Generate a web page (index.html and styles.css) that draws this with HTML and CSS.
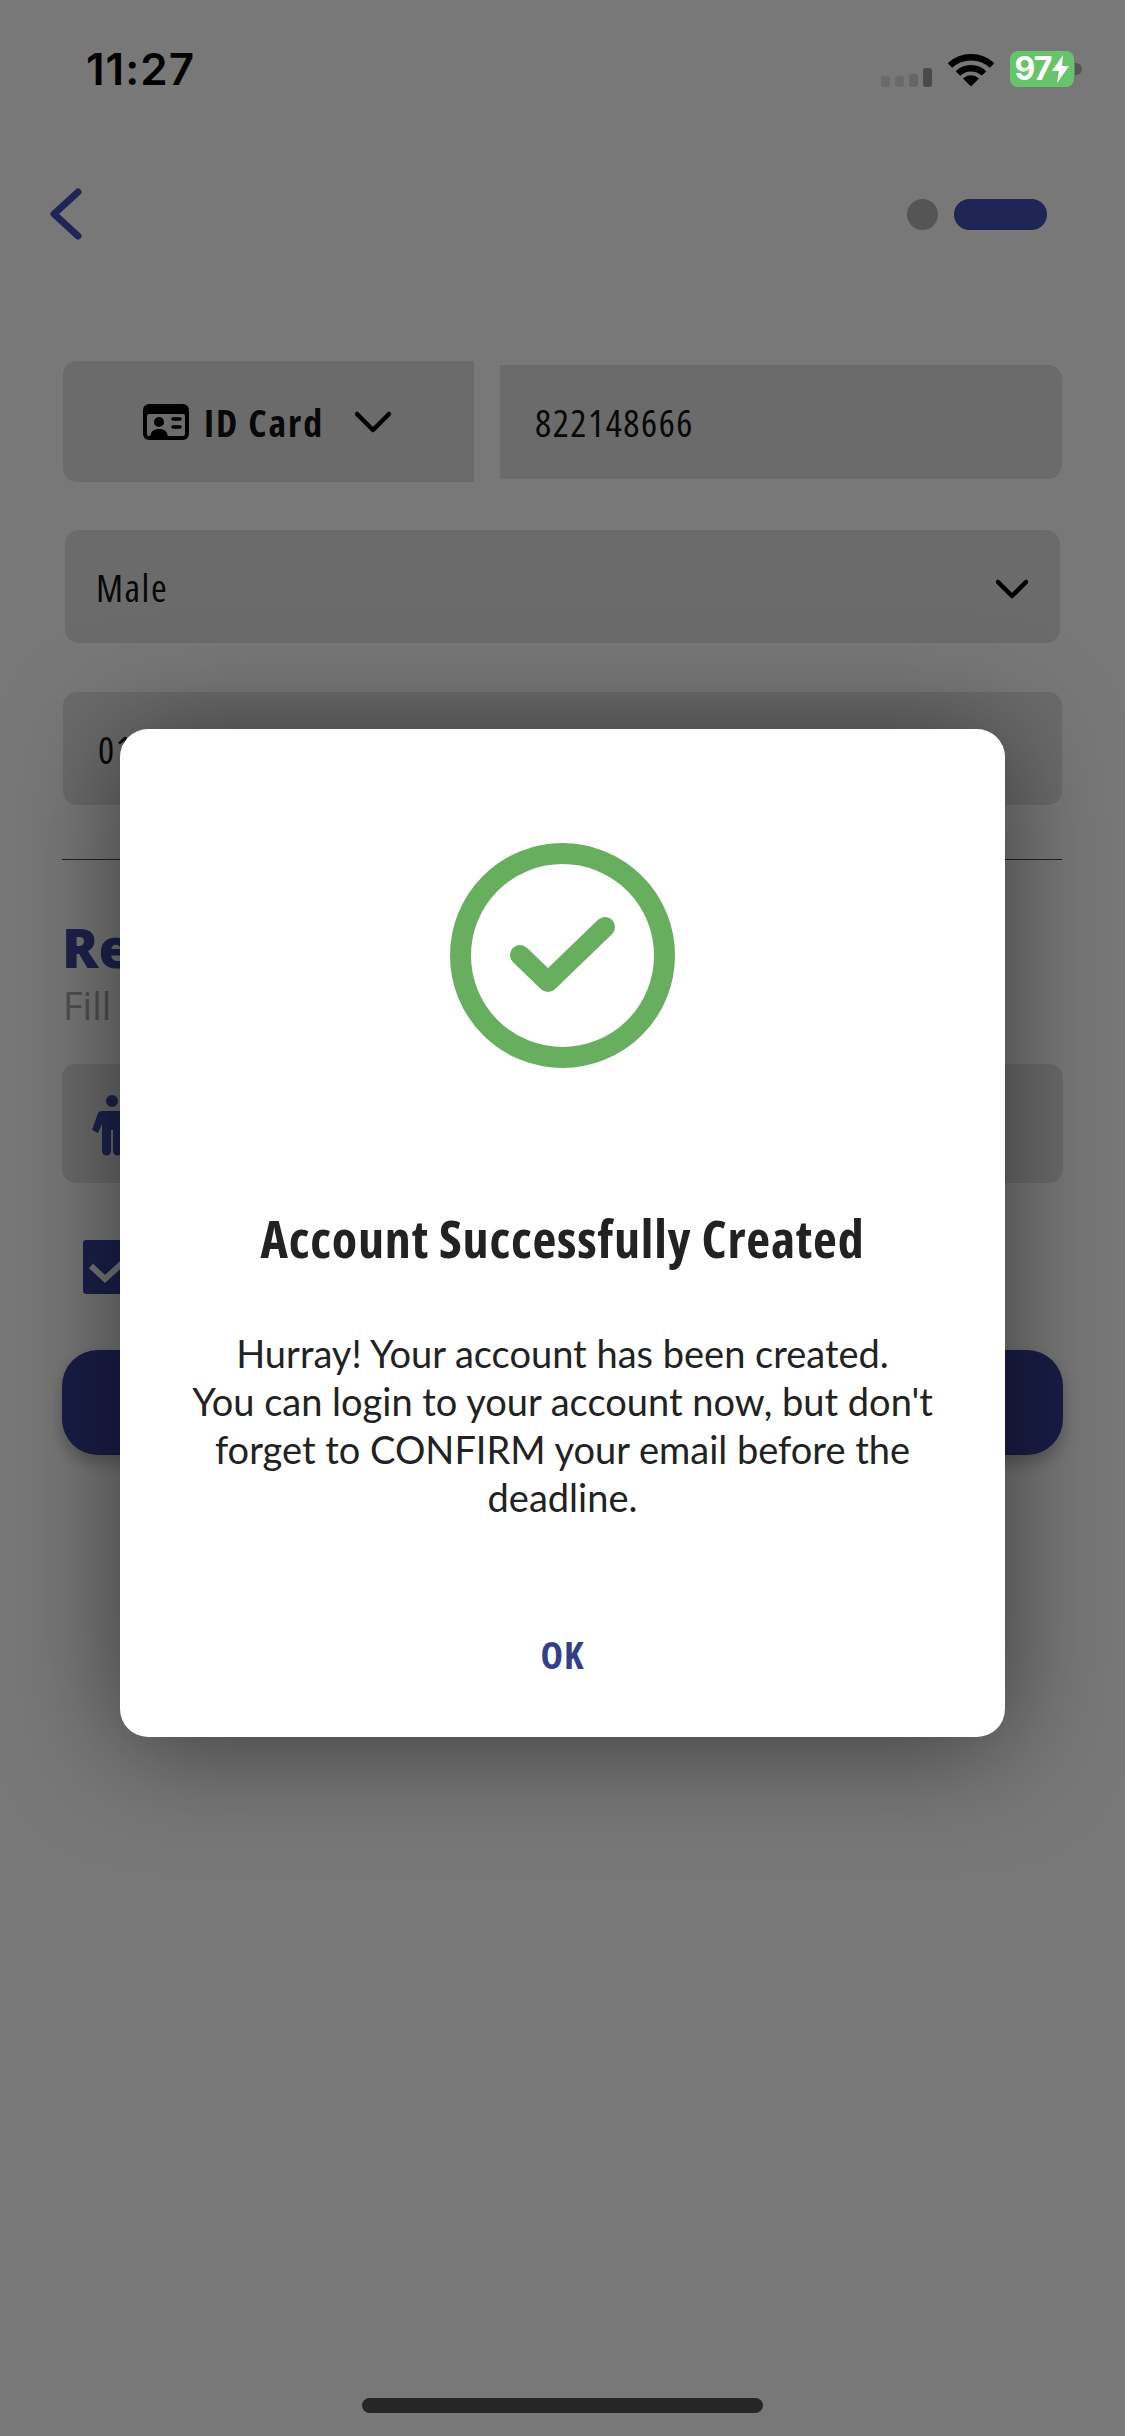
FILE: index.html
```html
<!DOCTYPE html>
<html lang="en">
<head>
<meta charset="utf-8">
<title>Account Successfully Created</title>
<link rel="stylesheet" href="styles.css">
</head>
<body>
<main class="page">
  <div class="statusbar">
    <span class="time">11:27</span>
    <div class="status-icons">
      <svg class="signal" width="52" height="20" viewBox="0 0 52 20"><rect x="0" y="8" width="9" height="11" rx="3" fill="#6a6a6a"/><rect x="14" y="8" width="9" height="11" rx="3" fill="#6a6a6a"/><rect x="28" y="6" width="9" height="13" rx="3" fill="#666"/><rect x="42" y="0" width="9" height="19" rx="3" fill="#4a4a4a"/></svg>
      <svg class="wifi" width="46" height="34" viewBox="0 0 46 34"><path d="M2 12.500C13.500 1.500 32.500 1.500 44 12.500" fill="none" stroke="#000" stroke-width="6.500"/><path d="M10 20.500C17 13.500 29 13.500 36 20.500" fill="none" stroke="#000" stroke-width="6.500"/><path d="M15 25.500C20 21 26 21 31 25.500L23 33.500Z" fill="#000"/></svg>
      <div class="battery"><span class="battery-level">97</span><svg class="bolt" width="17" height="28" viewBox="0 0 17 28"><path d="M11 0 0 16h7l-2 12L17 11h-7z" fill="#fff"/></svg></div>
      <span class="battery-nub"></span>
    </div>
  </div>

  <div class="nav">
    <svg class="back" width="32" height="54" viewBox="0 0 32 54"><path d="M28 5 4 27l24 22" fill="none" stroke="#424fb5" stroke-width="7" stroke-linecap="round" stroke-linejoin="round"/></svg>
    <div class="steps"><span class="step-dot"></span><span class="step-pill"></span></div>
  </div>

  <div class="id-row">
    <div class="field id-select">
      <svg class="id-icon" width="46" height="36" viewBox="0 0 46 36"><rect width="46" height="36" rx="6" fill="#000"/><rect x="4" y="10" width="38" height="22" rx="2" fill="#e4e4e4"/><circle cx="16" cy="18" r="5" fill="#000"/><path d="M7 35c0-8 4-10 9-10s9 2 9 10z" fill="#000"/><path d="M30 15h7M30 23h7" stroke="#000" stroke-width="3.500" stroke-linecap="round"/></svg>
      <span class="id-label">ID Card</span>
      <svg class="chev" width="36" height="22" viewBox="0 0 36 22"><path d="M2 3l16 16L34 3" fill="none" stroke="#000" stroke-width="4.500" stroke-linecap="round" stroke-linejoin="round"/></svg>
    </div>
    <div class="field id-number"><span class="value">822148666</span></div>
  </div>

  <div class="field gender">
    <span class="value">Male</span>
    <svg class="chev chev-low" width="32" height="20" viewBox="0 0 32 20"><path d="M2 3l14 14L30 3" fill="none" stroke="#000" stroke-width="4.500" stroke-linecap="round" stroke-linejoin="round"/></svg>
  </div>

  <div class="field phone"><span class="value">0112345678</span></div>
  <hr class="divider">

  <h2 class="section-title">Referral</h2>
  <p class="section-sub">Fill the referral code</p>

  <div class="field referral">
    <svg class="person" width="44" height="62" viewBox="0 0 44 62"><circle cx="22" cy="7" r="6" fill="#3f4a9f"/><path d="M12 17h20a6 6 0 0 1 5 2l5 15-6 3-4-9v29a4 4 0 0 1-9 0V36h-2v21a4 4 0 0 1-9 0V30l-4 9-6-3 6-17a6 6 0 0 1 4-2z" fill="#3f4a9f"/></svg>
  </div>

  <div class="terms">
    <span class="checkbox"><svg width="54" height="54" viewBox="0 0 54 54"><path d="M8 26l14 13 24-22" fill="none" stroke="#fff" stroke-width="6"/></svg></span>
  </div>

  <div class="submit"></div>
</main>

<div class="overlay">
  <section class="dialog">
    <svg class="success" width="225" height="225" viewBox="0 0 225 225">
      <circle cx="112.500" cy="112.500" r="102" fill="none" stroke="#68ae5f" stroke-width="21"/>
      <path d="M70 112l28 27 57-55" fill="none" stroke="#68ae5f" stroke-width="20" stroke-linecap="round" stroke-linejoin="round"/>
    </svg>
    <h1 class="dialog-title">Account Successfully Created</h1>
    <p class="dialog-text">Hurray! Your account has been created.<br>You can login to your account now, but don't forget to CONFIRM your email before the deadline.</p>
    <button class="ok">OK</button>
  </section>
</div>

<div class="home-indicator"></div>
</body>
</html>
```

FILE: styles.css
```css
* { box-sizing: border-box; }
html, body { margin: 0; height: 2436px; overflow: hidden; }
body {
  position: relative;
  width: 1125px;
  background: #fff;
  font-family: Lato, "Open Sans", sans-serif;
  color: #000;
}
.page { height: 2436px; padding: 51px 62px 0; display: flex; flex-direction: column; }
.statusbar { position: relative; z-index: 2; height: 36px; display: flex; justify-content: space-between; align-items: center; margin-right: -19px; margin-left: 24px; }
.time { font-family: Inter, sans-serif; font-size: 44px; font-weight: 600; letter-spacing: 1px; line-height: 36px; }
.status-icons { display: flex; align-items: flex-end; }
.signal { margin-bottom: -1px; margin-right: 15px; }
.wifi { margin-right: 16px; }
.battery { width: 64px; height: 36px; background: #66c46a; border-radius: 8px; display: flex; align-items: center; justify-content: center; gap: 1px; color: #fff; }
.battery-level { font-family: Inter, sans-serif; font-size: 32px; font-weight: 700; line-height: 36px; letter-spacing: -1px; }
.battery-nub { width: 7px; height: 12px; background: #555; border-radius: 0 6px 6px 0; margin: 0 0 12px 1px; }
.nav { height: 54px; margin-top: 100px; margin-left: -12px; display: flex; justify-content: space-between; align-items: center; padding-right: 16px; }
.steps { display: flex; gap: 16px; margin-top: 1px; }
.step-dot { width: 31px; height: 31px; border-radius: 50%; background: #b5b5b5; }
.step-pill { width: 93px; height: 31px; border-radius: 16px; background: #424fb5; }
.field { background: #e4e4e4; border-radius: 14px; display: flex; align-items: center; }
.value { font-family: "Open Sans", sans-serif; font-stretch: 75%; font-size: 38px; line-height: 48px; color: #111; letter-spacing: 1.500px; }
.id-row { display: flex; align-items: center; margin-top: 120px; margin-left: 1px; margin-right: 1px; gap: 26px; }
.id-select { width: 411px; height: 121px; border-radius: 14px 0 0 14px; padding-left: 80px; flex: none; }
.id-icon { margin-right: 15px; }
.id-label { font-family: "Open Sans", sans-serif; font-stretch: 75%; letter-spacing: 2px; font-size: 38px; font-weight: 700; margin-right: 31px; color: #111; }
.id-number { flex: 1; height: 114px; padding-left: 35px; border-radius: 0 14px 14px 0; }
.gender { height: 113px; margin: 48px 3px 0; justify-content: space-between; padding: 0 32px 0 31px; }
.chev-low { margin-top: 5px; }
.phone { height: 113px; margin: 49px 1px 0; padding-left: 35px; }
.divider { height: 1px; flex: none; border: 0; background: #444; margin: 54px 1px 0 0; }
.section-title { font-family: "Open Sans", sans-serif; font-size: 54px; font-weight: 800; margin: 60px 0 0; line-height: 54px; color: #3f4a9f; }
.section-sub { font-family: "Open Sans", sans-serif; font-size: 38px; margin: 7px 0 0 1px; line-height: 48px; color: #aaa; }
.referral { height: 119px; margin-top: 35px; padding: 3px 0 0 28px; }
.terms { margin: 57px 0 0 21px; }
.checkbox { display: block; width: 54px; height: 54px; background: #38449f; border-radius: 3px; }
.submit { height: 105px; flex: none; margin-top: 56px; border-radius: 36px; background: #363e95; box-shadow: 0 8px 16px rgba(0,0,0,.25); }
.overlay { position: absolute; inset: 0; z-index: 1; background: rgba(0,0,0,.53); padding: 729px 120px 0; }
.dialog { height: 1008px; background: #fff; border-radius: 28px; box-shadow: 0 8px 110px rgba(0,0,0,.5); display: flex; flex-direction: column; align-items: center; padding-top: 114px; }
.dialog-title { margin: 138px 0 0; font-family: "Open Sans", sans-serif; font-stretch: 75%; font-size: 52px; letter-spacing: .8px; line-height: 64px; font-weight: 700; color: #222; }
.dialog-text { margin: 59px 45px 0; font-size: 38px; line-height: 48px; text-align: center; color: #222; }
.ok { margin-top: 109px; border: 0; background: none; padding: 0; font: 700 38px/48px "Open Sans", sans-serif; font-stretch: 75%; letter-spacing: 1px; color: #353f85; }
.home-indicator { position: absolute; z-index: 2; left: 362px; top: 2398px; width: 401px; height: 15px; border-radius: 8px; background: #262626; }
```
